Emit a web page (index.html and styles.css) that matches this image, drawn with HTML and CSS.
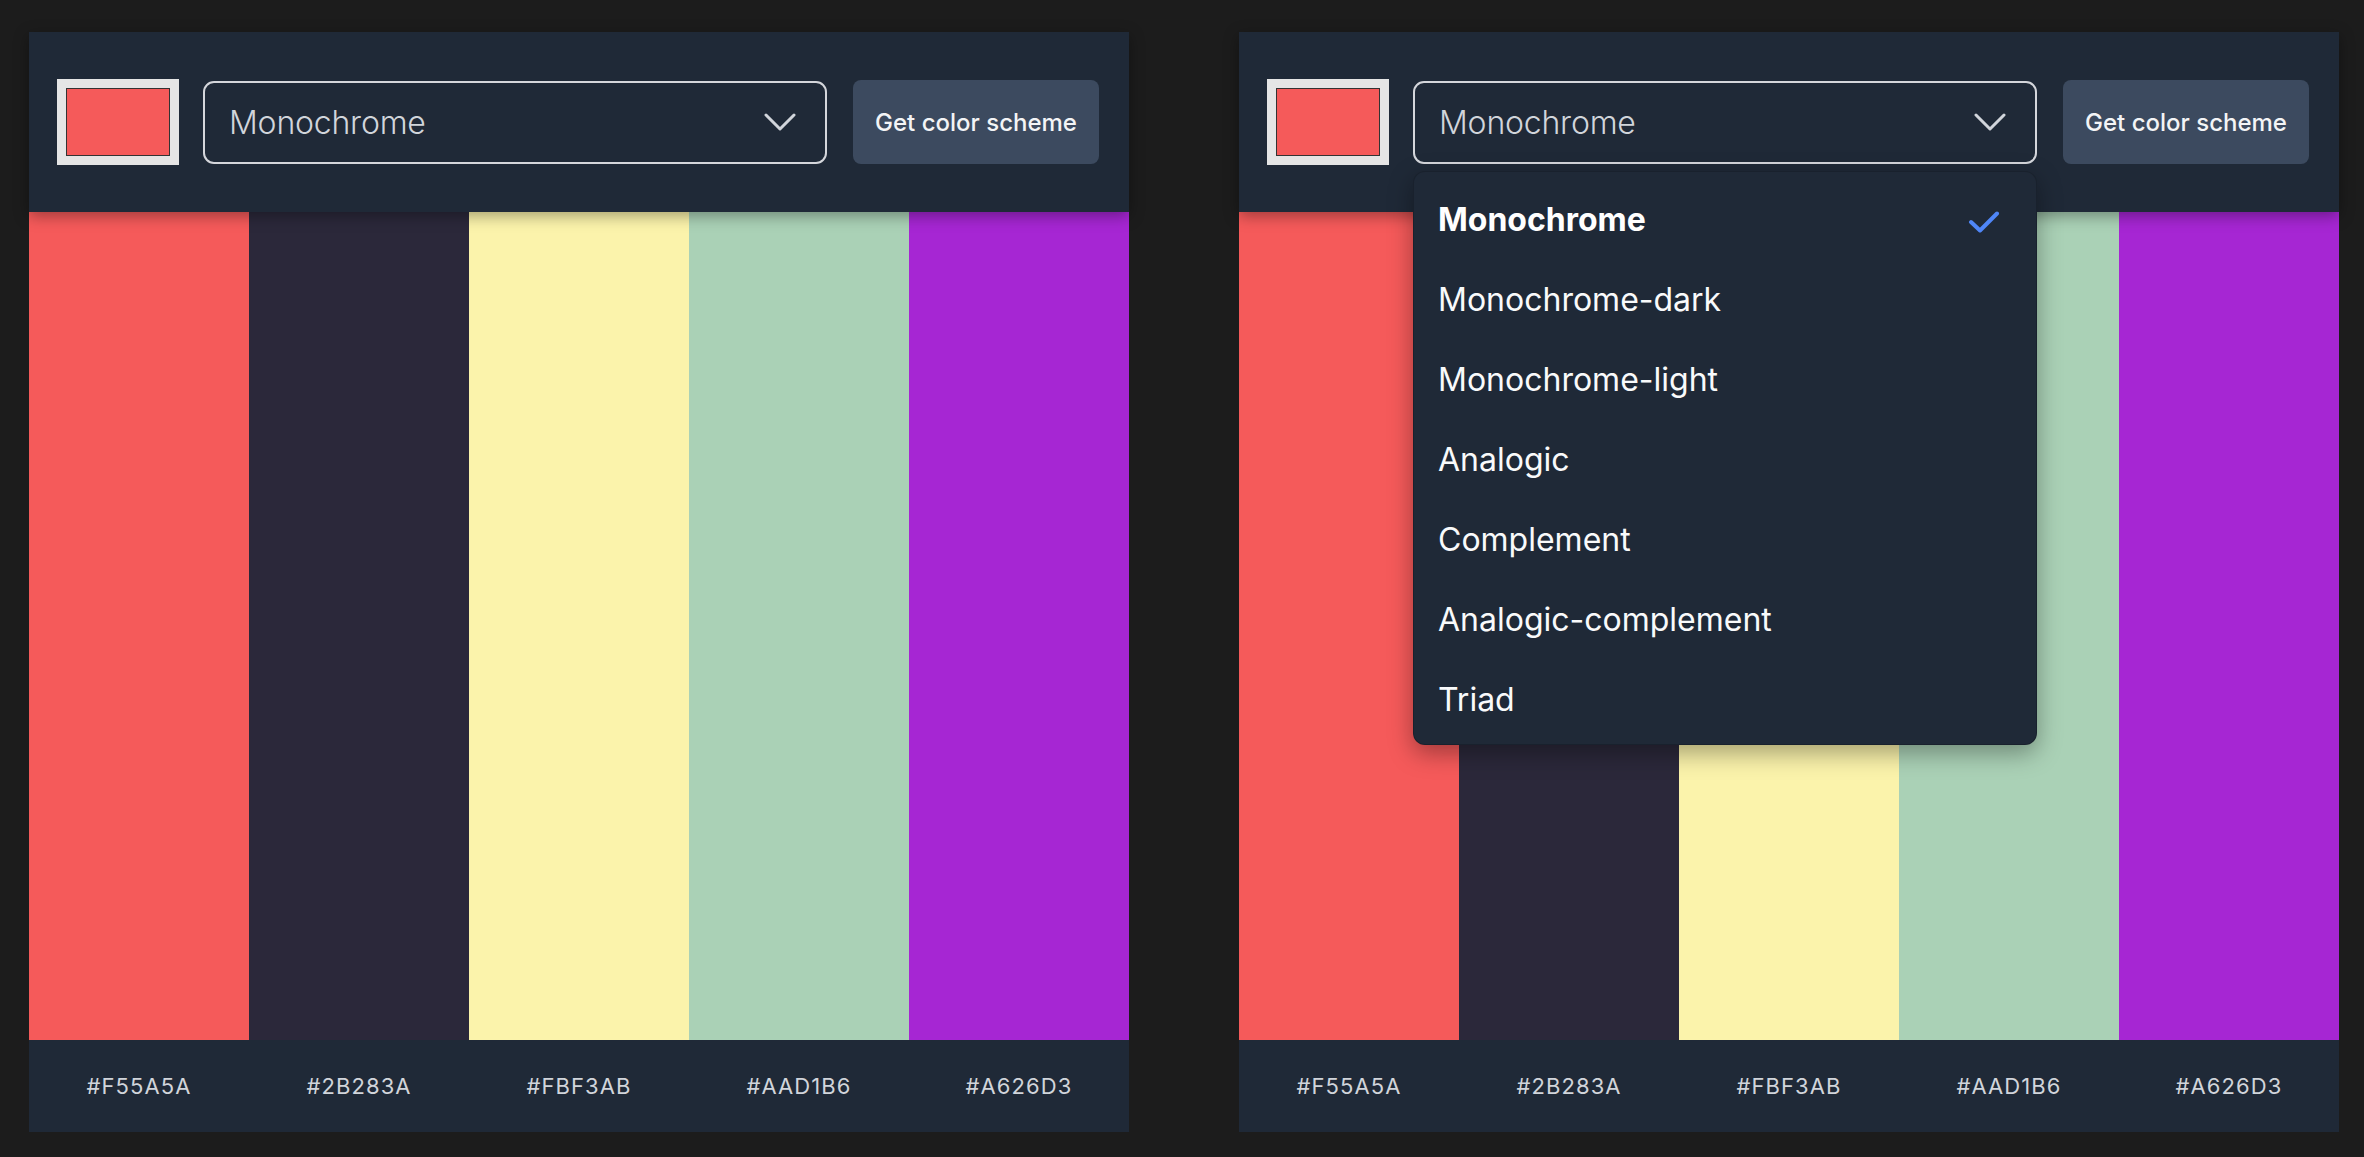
FILE: index.html
```html
<!DOCTYPE html>
<html lang="en">
<head>
<meta charset="utf-8">
<title>Color Scheme Generator</title>
<link rel="stylesheet" href="styles.css">
</head>
<body>
<main class="page">
  <section class="panel">
    <header class="controls">
      <div class="color-input"><div class="color-input__swatch"></div></div>
      <div class="select">
        <span class="select__value">Monochrome</span>
        <svg class="select__chevron" viewBox="0 0 32 18" width="32" height="18"><polyline points="2,2 16,16 30,2" fill="none" stroke="currentColor" stroke-width="3" stroke-linecap="round" stroke-linejoin="round"/></svg>
      </div>
      <button class="btn">Get color scheme</button>
    </header>
    <div class="swatches">
      <div class="swatch" style="background:#F55A5A"></div>
      <div class="swatch" style="background:#2B283A"></div>
      <div class="swatch" style="background:#FBF3AB"></div>
      <div class="swatch" style="background:#AAD1B6"></div>
      <div class="swatch" style="background:#A626D3"></div>
    </div>
    <footer class="codes">
      <span class="code">#F55A5A</span>
      <span class="code">#2B283A</span>
      <span class="code">#FBF3AB</span>
      <span class="code">#AAD1B6</span>
      <span class="code">#A626D3</span>
    </footer>
  </section>

  <section class="panel">
    <header class="controls">
      <div class="color-input"><div class="color-input__swatch"></div></div>
      <div class="select">
        <span class="select__value">Monochrome</span>
        <svg class="select__chevron" viewBox="0 0 32 18" width="32" height="18"><polyline points="2,2 16,16 30,2" fill="none" stroke="currentColor" stroke-width="3" stroke-linecap="round" stroke-linejoin="round"/></svg>
        <ul class="menu">
          <li class="menu__item menu__item--selected">Monochrome
            <svg class="menu__check" viewBox="0 0 32 23" width="32" height="23"><polyline points="3,12 12,20.5 29,3.5" fill="none" stroke="currentColor" stroke-width="4" stroke-linecap="round" stroke-linejoin="round"/></svg>
          </li>
          <li class="menu__item">Monochrome-dark</li>
          <li class="menu__item">Monochrome-light</li>
          <li class="menu__item">Analogic</li>
          <li class="menu__item">Complement</li>
          <li class="menu__item">Analogic-complement</li>
          <li class="menu__item">Triad</li>
        </ul>
      </div>
      <button class="btn">Get color scheme</button>
    </header>
    <div class="swatches">
      <div class="swatch" style="background:#F55A5A"></div>
      <div class="swatch" style="background:#2B283A"></div>
      <div class="swatch" style="background:#FBF3AB"></div>
      <div class="swatch" style="background:#AAD1B6"></div>
      <div class="swatch" style="background:#A626D3"></div>
    </div>
    <footer class="codes">
      <span class="code">#F55A5A</span>
      <span class="code">#2B283A</span>
      <span class="code">#FBF3AB</span>
      <span class="code">#AAD1B6</span>
      <span class="code">#A626D3</span>
    </footer>
  </section>
</main>
</body>
</html>
```
FILE: styles.css
```css
* { box-sizing: border-box; }

html, body {
  margin: 0;
  padding: 0;
  background: #1c1c1c;
  font-family: "Inter", "Noto Sans", "Liberation Sans", sans-serif;
}

.page {
  display: flex;
  gap: 110px;
  padding: 32px 0 0 29px;
}

.panel {
  width: 1100px;
  height: 1100px;
  display: flex;
  flex-direction: column;
  background: #1f2937;
}

.controls {
  position: relative;
  z-index: 2;
  height: 180px;
  flex: none;
  display: flex;
  align-items: center;
  padding: 0 30px 0 28px;
  background: #1f2937;
  box-shadow: 0 4px 14px rgba(0, 0, 0, 0.35);
}

.color-input {
  width: 122px;
  height: 86px;
  flex: none;
  padding: 9px;
  background: #e5e5e5;
  margin-right: 24px;
}

.color-input__swatch {
  width: 100%;
  height: 100%;
  background: #f55a5a;
  border: 1px solid #333;
}

.select {
  position: relative;
  flex: 1;
  height: 83px;
  margin-right: 26px;
  display: flex;
  align-items: center;
  justify-content: space-between;
  padding: 0 29px 0 24px;
  border: 2px solid #d4d6db;
  border-radius: 11px;
  color: #d1d5db;
}

.select__value {
  font-size: 32px;
  font-weight: 300;
  letter-spacing: -0.2px;
}

.select__chevron {
  display: block;
  color: #d1d5db;
}

.btn {
  width: 246px;
  height: 84px;
  flex: none;
  border: none;
  border-radius: 8px;
  background: #3c4a5f;
  color: #f3f4f6;
  font-family: "Inter", "Noto Sans", sans-serif;
  font-size: 24px;
  font-weight: 500;
  padding: 0;
}

.menu {
  position: absolute;
  top: calc(100% + 9px);
  left: -2px;
  right: -2px;
  margin: 0;
  padding: 8px 0 4px;
  list-style: none;
  background: #1f2937;
  border: 1px solid rgba(0, 0, 0, 0.18);
  border-radius: 12px;
  box-shadow: 0 8px 24px rgba(0, 0, 0, 0.35);
  z-index: 5;
}

.menu__item {
  height: 80px;
  display: flex;
  align-items: center;
  justify-content: space-between;
  padding: 0 36px 0 24px;
  font-size: 32px;
  font-weight: 400;
  color: #f9fafb;
}

.menu__item--selected {
  font-weight: 700;
  color: #ffffff;
}

.menu__check {
  display: block;
  color: #4f86f7;
  margin-top: 4px;
}

.swatches {
  flex: 1;
  display: flex;
}

.swatch {
  flex: 1;
}

.codes {
  height: 92px;
  flex: none;
  display: flex;
  align-items: center;
  background: #1f2937;
}

.code {
  flex: 1;
  text-align: center;
  font-size: 22px;
  font-weight: 400;
  letter-spacing: 1.1px;
  color: #d1d5db;
}
```
